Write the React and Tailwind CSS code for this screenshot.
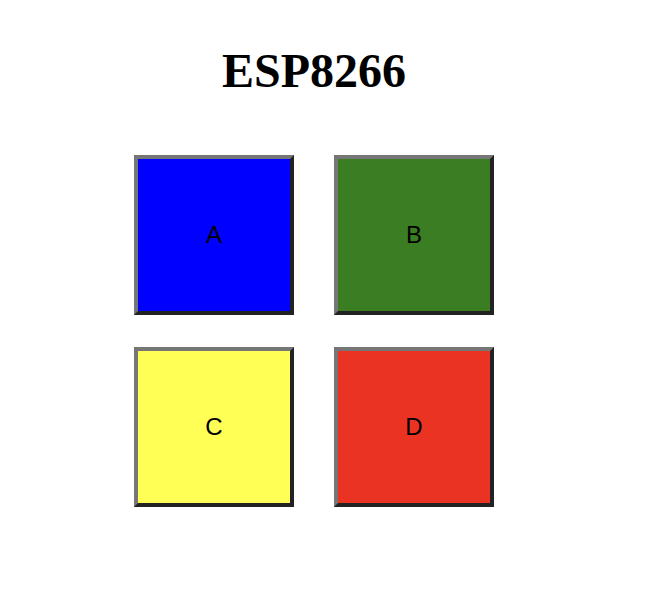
import React from 'react';

const buttons = [
  [
    { label: 'A', bg: 'bg-[#0000ff]' },
    { label: 'B', bg: 'bg-[#3a7d22]' },
  ],
  [
    { label: 'C', bg: 'bg-[#ffff55]' },
    { label: 'D', bg: 'bg-[#ea3323]' },
  ],
];

const App = () => {
  return (
    <div className="w-[628px] h-[596px] bg-white flex flex-col items-center">
      <h1 className="mt-[43px] text-[48px] leading-[56px] font-bold text-black font-['Liberation_Serif',serif]">
        ESP8266
      </h1>
      <div className="mt-[56px] flex flex-col gap-[32px]">
        {buttons.map((row, i) => (
          <div key={i} className="flex gap-[40px]">
            {row.map((b) => (
              <button
                key={b.label}
                className={`w-[160px] h-[160px] ${b.bg} border-4 border-t-[#767676] border-l-[#767676] border-r-[#222222] border-b-[#222222] text-[24px] text-black font-['Liberation_Sans',sans-serif]`}
              >
                {b.label}
              </button>
            ))}
          </div>
        ))}
      </div>
    </div>
  );
};

export default App;
